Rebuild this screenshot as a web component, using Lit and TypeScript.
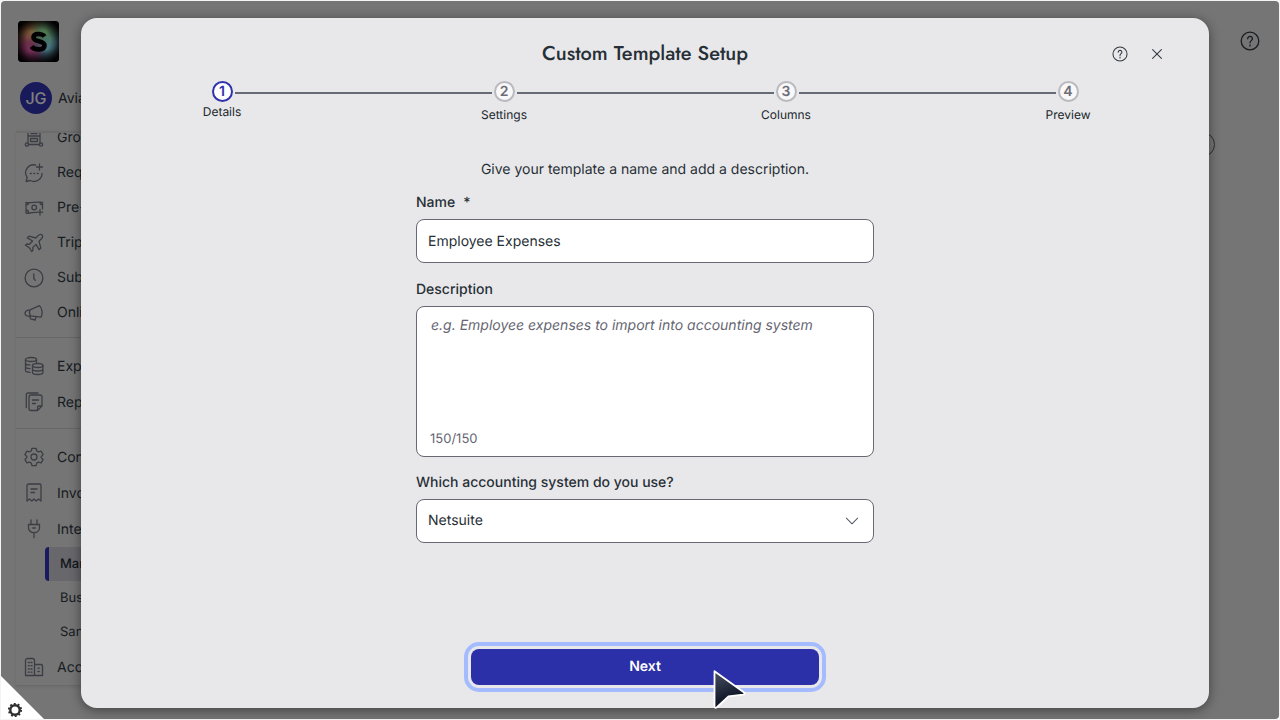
import { LitElement, html, svg, css, nothing } from "lit";
import { customElement, property, state } from "lit/decorators.js";
import { classMap } from "lit/directives/class-map.js";

const glyphs: Record<string, unknown> = {
  group: svg`<path d="M4 1v15M16 1v15M4 8h12M7 2.500h6v3H7zM6.500 10.500h7v3h-7zM4.500 16.500h11"/><circle cx="3" cy="16.500" r="1.700"/><circle cx="17" cy="16.500" r="1.700"/>`,
  request: svg`<path d="M11.500 2A8 8 0 0 0 3.200 14.500L2 18.500l4.300-1A8 8 0 0 0 18 10.500M15.500 1v6M12.500 4h6"/><path d="M6.500 10.500h.6M10 10.500h.6M13.500 10.500h.6" stroke-width="1.600"/>`,
  cash: svg`<path d="M12.500 14.500c-3-1-6 1.600-10.500.5V4.500c5 1.200 11-1.500 16.500 0V11M16 11.500v5.500M13.200 14.200h5.600M2 7c1.500 0 2.500-1 2.500-2.300M16 4.200c0 1.500 1 2.600 2.500 2.600M2 12c1.500 0 2.500 1 2.500 2.800"/><circle cx="10.200" cy="9.500" r="2.300"/>`,
  plane: svg`<path d="M18 2c-1-1-2.900-.3-4 .8L11.700 5 5 3.200 3.300 4.900 8.600 8 5.400 11.300 2.800 11 1.500 12.300l3.800 2.400L7.700 18.500 9 17.200l-.3-2.600L12 11.400l3.100 5.300L16.800 15 15 8.300 17.200 6C18.300 4.900 19 3 18 2z"/>`,
  clock: svg`<circle cx="10" cy="10" r="8.900"/><path d="M9.800 5.800v4.700l1.500 1.800"/>`,
  horn: svg`<path d="M6 6.800 15.500 2.700c2.500 1.800 3.500 8 1.500 11.500L6.500 12.800C2.500 14 .5 12 1.200 9.500 1.500 7.800 3.500 7 6 6.800zM6 6.800c-.8 2-.6 4 .5 6M5.500 13l1 2.800 4.700 1.200.8-3.200"/>`,
  coins: svg`<ellipse cx="7" cy="3.500" rx="5.500" ry="2"/><path d="M1.500 3.500v11c0 1 2 1.800 4.500 1.900M1.500 7c0 1 2 1.900 4.500 1.900M1.500 10.800c0 1 2 1.800 4.500 1.900M12.500 3.500v3"/><ellipse cx="13.700" cy="9.500" rx="5.200" ry="2"/><path d="M8.500 9.500v7c0 1 2.300 2 5.200 2s5.200-1 5.200-2v-7M8.500 13c0 1 2.300 2 5.200 2s5.200-1 5.200-2"/>`,
  report: svg`<path d="M13.500 18.500H7a2 2 0 0 1-2-2V5a2 2 0 0 1 2-2h9a2 2 0 0 1 2 2v9zM13.500 18.500V15.500a1.500 1.500 0 0 1 1.500-1.500h3M2.300 15.500V3a2 2 0 0 1 2-2H14M8.500 8h6M8.500 11.500h3"/>`,
  cog: svg`<path d="M8 1.300h4l.8 2.700 1.600.9 2.700-.7 2 3.400L17.200 9.600v1L19.100 12.500l-2 3.300-2.700-.7-1.600.9L12 18.700H8L7.200 16l-1.600-.9-2.700.7-2-3.400 1.900-1.900v-1L.9 7.600l2-3.400 2.700.7L7.200 4z"/><circle cx="10" cy="10" r="3"/>`,
  invoice: svg`<path d="M3 18V2.500A1.500 1.500 0 0 1 4.500 1h11A1.500 1.500 0 0 1 17 2.500V18l-2.500-2-2.300 2L10 16l-2.200 2-2.300-2zM7 6h6M7 9.500h3.500"/>`,
  plug: svg`<path d="M7 1v4.500M13 1v4.500M4.500 5.500h11v3c0 3-2.300 5.200-5.500 5.200S4.500 11.500 4.500 8.500zM10 13.700v5M8.800 9h2.400"/>`,
  building: svg`<path d="M1.500 18.500v-15a2 2 0 0 1 2-2h5a2 2 0 0 1 2 2v15zM10.500 7.500H17a1.500 1.500 0 0 1 1.500 1.500v9.500h-8"/><path d="M4.300 5.500h1M7 5.500h1M4.300 8.700h1M7 8.700h1M4.300 12h1M7 12h1M4.300 15.200h1M7 15.200h1M14 11.200h1.200M14 14.500h1.200"/>`,
  help: svg`<circle cx="10" cy="10" r="8.800"/><path d="M7.700 7.800c0-3.200 4.800-3 4.700 0 0 1.800-2.400 1.900-2.400 4M10 13.900v1.100"/>`,
  close: svg`<path d="M4.500 4.500l11 11M15.500 4.500l-11 11"/>`,
  chevron: svg`<path d="M3 6.500 10 13.500 17 6.500"/>`,
};

const icon = (name: string) =>
  html`<svg class="icon" viewBox="0 0 20 20" aria-hidden="true">${glyphs[name]}</svg>`;

const shared = css`
  * { box-sizing: border-box; }
  button { font: inherit; color: inherit; border: 0; padding: 0; background: none; cursor: pointer; }
  button, input, select, textarea { text-rendering: inherit; }
  .icon { display: block; width: 100%; height: 100%; fill: none; stroke: currentColor; stroke-width: 1.3; stroke-linecap: round; stroke-linejoin: round; }
`;

type Item = { label: string; icon?: string; active?: boolean };
const sections: { size: string; items: Item[] }[] = [
  {
    size: "compact",
    items: [
      { label: "Groups", icon: "group" },
      { label: "Requests", icon: "request" },
      { label: "Pre-approvals", icon: "cash" },
      { label: "Trips", icon: "plane" },
      { label: "Subscriptions", icon: "clock" },
      { label: "Online", icon: "horn" },
    ],
  },
  {
    size: "regular",
    items: [
      { label: "Expenses", icon: "coins" },
      { label: "Reports", icon: "report" },
    ],
  },
  {
    size: "regular",
    items: [
      { label: "Configuration", icon: "cog" },
      { label: "Invoices", icon: "invoice" },
      { label: "Integrations", icon: "plug" },
      { label: "Manage", active: true },
      { label: "Business" },
      { label: "Sandbox" },
      { label: "Accounts", icon: "building" },
    ],
  },
];

@customElement("side-nav")
class SideNav extends LitElement {
  static styles = [shared, css`
    :host { display: flex; flex-direction: column; width: 240px; padding: 20px 14px 33px 15px; color: #2f3d46; font-size: 14px; }
    .logo { width: 41px; height: 41px; margin-left: 2px; }
    .account { display: flex; align-items: center; gap: 6px; height: 32px; margin: 20px 4px 0; color: #2a343c; white-space: nowrap; }
    .avatar { display: grid; place-items: center; width: 32px; height: 32px; border-radius: 50%; background: #3335b4; color: #fff; font-size: 16px; line-height: 18px; font-weight: 500; }
    .scroll { flex: 1; min-height: 0; overflow: hidden; margin-top: 17px; border-top: 2px solid #d9d9db; border-bottom: 1px solid #d4d4d6; box-shadow: 0 1px 3px rgba(0, 0, 0, 0.08); }
    .section { list-style: none; margin: 0; padding: 10px 0 8px; }
    .section + .section { border-top: 1px solid #cfcfd2; }
    .section:first-child { margin-top: -23px; padding-bottom: 7px; }
    .link { display: flex; align-items: center; gap: 13px; height: 36px; padding-left: 8px; color: inherit; text-decoration: none; white-space: nowrap; }
    .compact .link { height: 35px; }
    .child { height: 34px; margin-left: 29px; padding-left: 15px; font-size: 13px; }
    .active { border-left: 4px solid #3335c0; border-radius: 4px; padding-left: 11px; background: #cfcfd8; color: #262f36; font-weight: 500; }
    .glyph { width: 20px; height: 20px; color: #777a88; }
  `];

  render() {
    return html`
      <svg class="logo" viewBox="0 0 41 41" role="img" aria-label="Home">
        <defs>
          <radialGradient id="a" cx="0.28" cy="0.32" r="0.5"><stop offset="0.2" stop-color="#ffb070"/><stop offset="1" stop-color="#f08a50" stop-opacity="0"/></radialGradient>
          <radialGradient id="b" cx="0.76" cy="0.55" r="0.5"><stop offset="0.3" stop-color="#90eaff"/><stop offset="1" stop-color="#60c0f0" stop-opacity="0"/></radialGradient>
          <radialGradient id="c" cx="0.24" cy="0.72" r="0.45"><stop offset="0.1" stop-color="#f860b8"/><stop offset="1" stop-color="#d040a0" stop-opacity="0"/></radialGradient>
          <radialGradient id="d" cx="0.66" cy="0.24" r="0.4"><stop offset="0.1" stop-color="#a0f0a0"/><stop offset="1" stop-color="#80e090" stop-opacity="0"/></radialGradient>
          <radialGradient id="e" cx="0.5" cy="0.5" r="0.64"><stop offset="0.45" stop-color="#000" stop-opacity="0"/><stop offset="0.95" stop-color="#000"/></radialGradient>
        </defs>
        <rect width="41" height="41" rx="4" fill="#30242c"/>
        <rect width="41" height="41" rx="4" fill="url(#a)"/>
        <rect width="41" height="41" rx="4" fill="url(#b)"/>
        <rect width="41" height="41" rx="4" fill="url(#c)"/>
        <rect width="41" height="41" rx="4" fill="url(#d)"/>
        <rect width="41" height="41" rx="4" fill="url(#e)"/>
        <path d="M26.500 15.500C24.500 12.500 15.500 11.500 15.500 16.500 15.500 21.500 26.500 19 26.500 24.500 26.500 29.500 16.500 29.500 13.500 25.500" fill="none" stroke="#000" stroke-width="4.600"/>
      </svg>
      <div class="account"><span class="avatar">JG</span><span>Aviato</span></div>
      <nav class="scroll">
        ${sections.map((s) => html`
          <ul class="section ${s.size}">
            ${s.items.map((i) => html`<li>
              <a href="#" class=${classMap({ link: true, child: !i.icon, active: !!i.active })}>
                ${i.icon ? html`<span class="glyph">${icon(i.icon)}</span>` : nothing}<span>${i.label}</span>
              </a></li>`)}
          </ul>`)}
      </nav>`;
  }
}

@customElement("step-track")
class StepTrack extends LitElement {
  @property({ type: Number }) current = 1;
  static styles = [shared, css`
    :host { display: block; }
    .steps { display: grid; grid-template-columns: repeat(4, 1fr); list-style: none; margin: 0; padding: 0; }
    .step { display: flex; flex-direction: column; align-items: center; gap: 3px; font-size: 12px; line-height: 20px; color: #20272d; }
    .track { display: flex; align-items: center; align-self: stretch; gap: 2px; }
    .line { flex: 1; height: 2px; margin-top: 2px; background: #666a74; }
    .step:first-child .line:first-child, .step:last-child .line:last-child { background: none; }
    .dot { display: grid; place-items: center; width: 21px; height: 21px; border: 2px solid #b9b9bf; border-radius: 50%; background: #f8f8f9; color: #6d6d77; font-size: 14px; line-height: 18px; font-weight: 600; }
    .on { gap: 0; }
    .on .dot { border-color: #2f31ad; color: #2f31ad; background: #fff; }
  `];
  render() {
    return html`<ol class="steps">
      ${["Details", "Settings", "Columns", "Preview"].map((label, i) => html`
        <li class=${classMap({ step: true, on: i + 1 === this.current })}>
          <span class="track"><span class="line"></span><span class="dot">${i + 1}</span><span class="line"></span></span>
          <span>${label}</span>
        </li>`)}
    </ol>`;
  }
}

@customElement("template-dialog")
class TemplateDialog extends LitElement {
  @state() private name = "Employee Expenses";
  @state() private description = "";
  static styles = [shared, css`
    :host { display: flex; flex-direction: column; background: #e8e8ea; border-radius: 16px; box-shadow: 0 2px 12px rgba(0, 0, 0, 0.45); color: #272f36; font-size: 14px; line-height: 20px; }
    .head { display: grid; grid-template-columns: 1fr auto 1fr; align-items: center; padding: 20px 42px 0; }
    .title { grid-column: 2; margin: 0; font: 500 20px/32px Jost, Lato, sans-serif; }
    .tools { display: flex; justify-content: flex-end; gap: 17px; }
    .tool { display: grid; width: 20px; height: 20px; padding: 2px; color: #30383f; }
    .steps { margin-top: 11px; }
    .form { flex: 1; display: flex; flex-direction: column; align-items: center; padding: 35px 20px 23px; }
    .fields { display: flex; flex-direction: column; width: 100%; max-width: 458px; }
    .intro { margin: 0 0 13px; text-align: center; }
    .label { font-weight: 500; margin-bottom: 6px; }
    .star { margin-left: 8px; }
    .box { width: 100%; border: 1px solid #686874; border-radius: 8px; background: #fff; }
    .field { font: inherit; color: inherit; height: 44px; padding: 0 11px; outline: 0; margin: 0 0 17px; }
    .area { display: flex; flex-direction: column; height: 151px; padding: 9px 13px 7px; margin-bottom: 16px; }
    .text { flex: 1; font: inherit; color: inherit; border: 0; outline: 0; padding: 0 1px; resize: none; background: none; }
    .text::placeholder { color: #666672; font-style: italic; opacity: 1; }
    .count { color: #666672; font-size: 13px; }
    .pick { display: grid; align-items: center; }
    .pick > * { grid-area: 1 / 1; }
    .select { appearance: none; margin: 0; }
    .chevron { justify-self: end; width: 16px; height: 16px; margin-right: 14px; color: #555b66; pointer-events: none; }
    .next { width: 348px; max-width: 90%; height: 36px; margin-top: auto; border-radius: 8px; background: #2c30a8; color: #fff; font-weight: 600; outline: 4px solid #a4bcff; outline-offset: 3px; }
  `];
  render() {
    return html`
      <header class="head">
        <h1 class="title">Custom Template Setup</h1>
        <div class="tools">
          <button class="tool" aria-label="Help">${icon("help")}</button>
          <button class="tool" aria-label="Close">${icon("close")}</button>
        </div>
      </header>
      <step-track class="steps" .current=${1}></step-track>
      <form class="form" @submit=${(e: Event) => e.preventDefault()}>
        <div class="fields">
          <p class="intro">Give your template a name and add a description.</p>
          <label class="label" for="name">Name<span class="star">*</span></label>
          <input class="box field" id="name" required .value=${this.name}
            @input=${(e: Event) => (this.name = (e.target as HTMLInputElement).value)} />
          <label class="label" for="description">Description</label>
          <div class="box area">
            <textarea class="text" id="description" maxlength="150"
              placeholder="e.g. Employee expenses to import into accounting system"
              @input=${(e: Event) => (this.description = (e.target as HTMLTextAreaElement).value)}></textarea>
            <span class="count">${150 - this.description.length}/150</span>
          </div>
          <label class="label" for="system">Which accounting system do you use?</label>
          <div class="pick">
            <select class="box field select" id="system"><option>Netsuite</option><option>Xero</option></select>
            <span class="chevron">${icon("chevron")}</span>
          </div>
        </div>
        <button class="next" type="submit">Next</button>
      </form>`;
  }
}

@customElement("app-root")
class AppRoot extends LitElement {
  static styles = [shared, css`
    :host { display: grid; grid-template-rows: minmax(0, 1fr); height: 100vh; padding: 1px; background: #f4f4f4; font-family: Inter, sans-serif; text-rendering: geometricPrecision; position: relative; overflow: hidden; box-sizing: border-box; }
    .page { display: grid; grid-template-columns: auto 1fr; grid-template-rows: minmax(0, 1fr); border-radius: 4px; overflow: hidden; background: #eaeaea; }
    .main { display: flex; flex-direction: column; align-items: flex-end; gap: 81px; padding: 30px 19px; color: #33383e; }
    .help { width: 20px; height: 20px; }
    .pill { width: 120px; height: 25px; margin-right: 45px; border: 1px solid #555a62; border-radius: 13px; }
    .shade { position: absolute; inset: 1px; display: grid; padding: 17px 70px 11px 80px; border-radius: 4px; background: rgba(0, 0, 0, 0.5); }
    .corner { position: absolute; left: 1px; bottom: 1px; width: 43px; height: 43px; background: #fff; clip-path: polygon(0 0, 100% 100%, 0 100%); }
    .corner svg { position: absolute; left: 6px; bottom: 1px; width: 16px; height: 16px; display: block; }
    .pointer { position: absolute; left: 712px; top: 668px; width: 36px; height: 43px; pointer-events: none; }
  `];
  render() {
    return html`
      <div class="page">
        <side-nav></side-nav>
        <main class="main">
          <button class="help" aria-label="Help">${icon("help")}</button>
          <button class="pill" aria-label="Options"></button>
        </main>
      </div>
      <div class="shade"><template-dialog role="dialog" aria-label="Custom Template Setup"></template-dialog></div>
      <button class="corner" aria-label="Settings">
        <svg viewBox="0 0 16 16" fill="none" stroke="#2e2e2e">
          <circle cx="8" cy="8" r="4.700" stroke-width="2.400"/>
          <circle cx="8" cy="8" r="6.200" stroke-width="1.800" stroke-dasharray="1.900 1.997"/>
        </svg>
      </button>
      <svg class="pointer" viewBox="0 0 36 43" aria-hidden="true">
        <defs><linearGradient id="ink" x1="0" y1="0" x2="0.3" y2="1"><stop offset="0" stop-color="#4a5262"/><stop offset="0.8" stop-color="#10182a"/></linearGradient></defs>
        <path d="M2.500 3.200 31.800 24.300Q34 26 31 26.600L16.500 28.300 5.200 39Q2.500 41 2.500 38z" fill="url(#ink)" stroke="#fff" stroke-width="1.800" stroke-linejoin="round"/>
      </svg>`;
  }
}
